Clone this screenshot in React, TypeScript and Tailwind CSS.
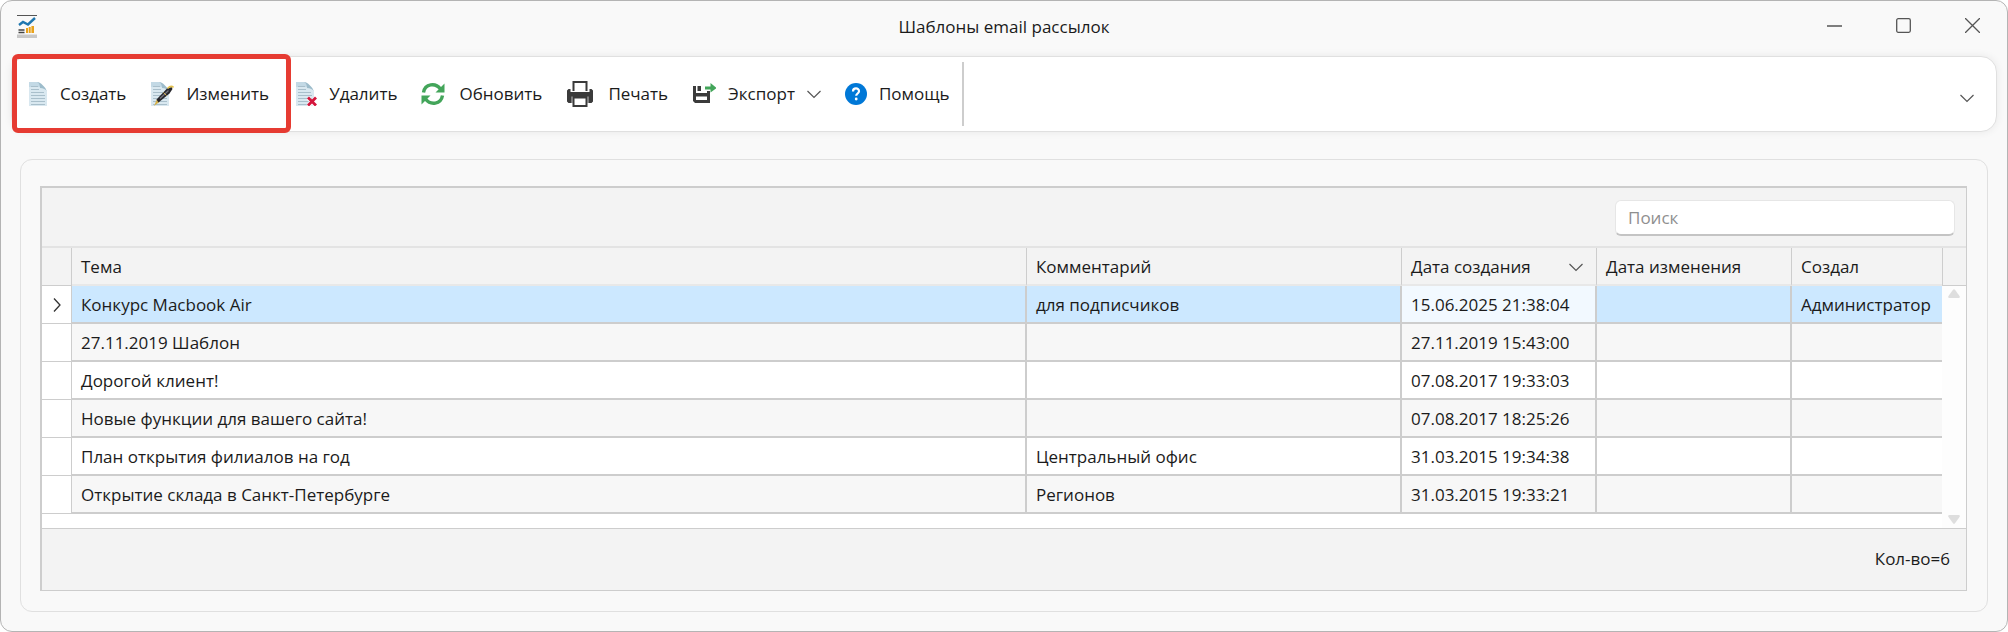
import type { ReactNode } from "react";
import clsx from "clsx";

type Template = {
  subject: string;
  comment: string;
  created: string;
  changed: string;
  author: string;
};

const templates: Template[] = [
  { subject: "Конкурс Macbook Air", comment: "для подписчиков", created: "15.06.2025 21:38:04", changed: "", author: "Администратор" },
  { subject: "27.11.2019 Шаблон", comment: "", created: "27.11.2019 15:43:00", changed: "", author: "" },
  { subject: "Дорогой клиент!", comment: "", created: "07.08.2017 19:33:03", changed: "", author: "" },
  { subject: "Новые функции для вашего сайта!", comment: "", created: "07.08.2017 18:25:26", changed: "", author: "" },
  { subject: "План открытия филиалов на год", comment: "Центральный офис", created: "31.03.2015 19:34:38", changed: "", author: "" },
  { subject: "Открытие склада в Санкт-Петербурге", comment: "Регионов", created: "31.03.2015 19:33:21", changed: "", author: "" },
];

function AppIcon() {
  return (
    <svg width="20" height="24" viewBox="0 0 20 24" fill="none" aria-hidden="true">
      <path d="M0 .5h20" stroke="#555" />
      <path d="M2 10l4-3 5 2.500L18 3" stroke="#1f77b0" strokeWidth="2.400" />
      <path d="M1.500 15h6M1.500 17.500h6" stroke="#444" strokeWidth="1.400" />
      <path d="M9 18v-5h2v5zM11.700 18v-6h2v6zM14.400 18v-7H17v7z" fill="#e9a21b" />
      <path d="M0 19.500h20V23H0z" fill="#c8c8c8" />
    </svg>
  );
}

// Sheet of paper shared by the create, edit and delete icons
function Sheet() {
  return (
    <>
      <path d="M1 0h8c3 .5 3.500 3 4 5 3 .5 5.500 2 6 5v14H1z" fill="#d9e8f0" />
      <path d="M1 0h8c3 .5 3.500 3 4 5H1z" fill="#c3d9e5" />
      <path d="M9 0c3 0 9 5 10 10-1-3-4-4-7-4 0-2-.5-5-3-6z" fill="#9dbccb" />
      <path d="M3 4.500h7M3 7.500h8M3 10.500h13M3 13.500h14M3 16.500h14M3 19.500h14M3 22.500h14" stroke="#a9bfcb" strokeWidth="1.200" />
    </>
  );
}

function CreateIcon() {
  return (
    <svg width="20" height="24" viewBox="0 0 20 24" aria-hidden="true">
      <Sheet />
    </svg>
  );
}

function EditIcon() {
  return (
    <svg width="24" height="24" viewBox="0 0 24 24" aria-hidden="true">
      <Sheet />
      <path d="M4 24l3-7 3 2.500z" fill="#d8b24a" />
      <path d="M6.500 17.500L17 6.500l4.500-1.500 1 2-3 4.500-11 9z" fill="#26262c" />
      <path d="M10 16.500l8.500-8" stroke="#77777f" strokeWidth="1.200" />
      <path d="M17.500 6.500c2-2 4.500-2.500 6-1" stroke="#e2c04c" strokeWidth="1.600" fill="none" />
      <path d="M13.500 10.500l3 3" stroke="#d8b24a" strokeWidth="1" />
    </svg>
  );
}

function DeleteIcon() {
  return (
    <svg width="22" height="24" viewBox="0 0 22 24" aria-hidden="true">
      <Sheet />
      <path d="M13 16l8 8M21 16l-8 8" stroke="#fff" strokeWidth="4" />
      <path d="M13 15.500l8 8M21 15.500l-8 8" stroke="#d4163c" strokeWidth="2.800" />
    </svg>
  );
}

function RefreshIcon() {
  return (
    <svg width="24" height="24" viewBox="0 0 24 24" fill="none" className="mr-0.5" aria-hidden="true">
      <path d="M2.500 10.500C4 1.500 14.500.5 19.500 7" stroke="#43a55a" strokeWidth="3.400" />
      <path d="M23.500 1.500v9h-9z" fill="#43a55a" />
      <path d="M21.500 13.500C20 22.500 9.500 23.500 4.500 17" stroke="#43a55a" strokeWidth="3.400" />
      <path d="M.5 22.500v-9h9z" fill="#43a55a" />
    </svg>
  );
}

function PrintIcon() {
  return (
    <svg width="28" height="28" viewBox="0 0 28 28" className="mr-0.5" aria-hidden="true">
      <path d="M7.500 11V2h13v9" fill="#fff" stroke="#3b3b3b" strokeWidth="2" />
      <path d="M1 10.500L2.500 9h2v3h19V9h2l1.500 1.500v11l-1.500 1.500h-23L1 21.500z" fill="#3b3b3b" />
      <path d="M7.500 17.500h13V26h-13z" fill="#fff" stroke="#3b3b3b" strokeWidth="2" />
      <path d="M6 16.500v6.500M22 16.500v6.500" stroke="#fff" strokeWidth=".7" />
    </svg>
  );
}

function ExportIcon() {
  return (
    <svg width="24" height="22" viewBox="0 0 24 22" aria-hidden="true">
      <path d="M1 3h3v7h11V8h3v12H3l-2-2z" fill="#3b3b3b" />
      <path d="M5.500 3H9v5H5.500z" fill="#3b3b3b" />
      <path d="M4 13.500h11V17H4z" fill="#fff" />
      <path d="M13 3.500h5.500V0l6 5-6 4.500V6.500H13z" fill="#43a55a" />
    </svg>
  );
}

function HelpIcon() {
  return (
    <svg width="22" height="22" viewBox="0 0 22 22" fill="none" aria-hidden="true">
      <circle cx="11" cy="11" r="11" fill="#0078d7" />
      <path d="M8 8.500C8 4.500 14 4.500 14 8.200c0 2.300-2.800 2.300-2.800 4.600" stroke="#fff" strokeWidth="2.200" />
      <circle cx="11.200" cy="16" r="1.400" fill="#fff" />
    </svg>
  );
}

function ChevronDown() {
  return (
    <svg width="14" height="9" viewBox="0 0 14 9" fill="none" stroke="#555" strokeWidth="1.200" aria-hidden="true">
      <path d="M.5 1L7 7.500 13.500 1" />
    </svg>
  );
}

function ToolbarButton({ icon, label, menu }: { icon: ReactNode; label: string; menu?: boolean }) {
  return (
    <button type="button" className="flex h-16 items-center gap-3 px-3 whitespace-nowrap">
      {icon}
      <span>{label}</span>
      {menu && <ChevronDown />}
    </button>
  );
}

function TitleBar() {
  return (
    <header className="grid h-[55px] grid-cols-[1fr_auto_1fr] items-start">
      <div className="pt-3.5 pl-4">
        <AppIcon />
      </div>
      <h1 className="pt-3.5 leading-6">Шаблоны email рассылок</h1>
      <div className="flex h-[49px] justify-end">
        <button type="button" aria-label="Свернуть" className="flex w-[69px] items-center justify-center">
          <svg width="15" height="15" viewBox="0 0 15 15" stroke="#555" strokeWidth="1.500">
            <path d="M0 8h15" />
          </svg>
        </button>
        <button type="button" aria-label="Развернуть" className="flex w-[69px] items-center justify-center">
          <svg width="15" height="15" viewBox="0 0 15 15" fill="none" stroke="#555" strokeWidth="1.300">
            <rect x=".7" y=".7" width="13.600" height="13.600" rx="1.500" />
          </svg>
        </button>
        <button type="button" aria-label="Закрыть" className="flex w-[69px] items-center justify-center">
          <svg width="15" height="15" viewBox="0 0 15 15" stroke="#555" strokeWidth="1.300">
            <path d="M0 0l15 15M15 0L0 15" />
          </svg>
        </button>
      </div>
    </header>
  );
}

function Toolbar() {
  return (
    <div className="mx-2.5 flex items-center rounded-2xl border border-[#e0e0e0] bg-white py-[5px] shadow-[0_0_8px_rgba(0,0,0,0.07)]">
      <div className="relative flex pr-2.5 pl-1">
        <ToolbarButton icon={<CreateIcon />} label="Создать" />
        <ToolbarButton icon={<EditIcon />} label="Изменить" />
        <div className="pointer-events-none absolute -top-2 right-0 -bottom-[7px] left-0 rounded-md border-[5px] border-[#e63b32]" />
      </div>
      <div className="-ml-2 flex">
        <ToolbarButton icon={<DeleteIcon />} label="Удалить" />
        <ToolbarButton icon={<RefreshIcon />} label="Обновить" />
        <ToolbarButton icon={<PrintIcon />} label="Печать" />
        <ToolbarButton icon={<ExportIcon />} label="Экспорт" menu />
        <ToolbarButton icon={<HelpIcon />} label="Помощь" />
      </div>
      <div className="h-16 w-0.5 bg-[#cdcdcd]" />
      <button type="button" aria-label="Дополнительно" className="ml-auto px-[22px] pt-3 pb-1">
        <ChevronDown />
      </button>
    </div>
  );
}

function HeaderCell({ children, last }: { children: ReactNode; last?: boolean }) {
  return (
    <th
      scope="col"
      className={clsx("h-[38px] border-b-2 border-b-[#e8e8e8] px-[9px] pt-0.5 text-left font-normal", !last && "border-r border-r-[#cdcdcd]")}
    >
      {children}
    </th>
  );
}

function TemplateRow({ item, index }: { item: Template; index: number }) {
  const selected = index === 0;
  const cell = "h-[38px] border-b-2 border-[#cdcdcd] px-[9px] pt-0.5";

  return (
    <tr className={selected ? "bg-[#cce8ff]" : index % 2 ? "bg-[#f7f7f7]" : "bg-white"}>
      <td className="h-[38px] border-r border-b border-[#cdcdcd] bg-white">
        {selected && (
          <svg width="8" height="14" viewBox="0 0 8 14" fill="none" stroke="#333" strokeWidth="1.300" className="mx-auto" aria-hidden="true">
            <path d="M1 .5L7 7l-6 6.500" />
          </svg>
        )}
      </td>
      <td className={clsx(cell, "border-r-2")}>{item.subject}</td>
      <td className={clsx(cell, "border-r-2")}>{item.comment}</td>
      <td className={clsx(cell, "border-r-2", selected && "bg-[#f2f9ff]")}>{item.created}</td>
      <td className={clsx(cell, "border-r-2")}>{item.changed}</td>
      <td className={cell}>{item.author}</td>
    </tr>
  );
}

function TemplateTable() {
  return (
    <table className="w-full table-fixed border-separate border-spacing-0 whitespace-nowrap">
      <colgroup>
        <col className="w-[30px]" />
        <col />
        <col className="w-[375px]" />
        <col className="w-[195px]" />
        <col className="w-[195px]" />
        <col className="w-[150px]" />
      </colgroup>
      <thead className="bg-[#f3f3f3]">
        <tr>
          <td className="border-r border-b border-[#cdcdcd]" />
          <HeaderCell>Тема</HeaderCell>
          <HeaderCell>Комментарий</HeaderCell>
          <HeaderCell>
            <div className="flex items-center justify-between pr-1">
              Дата создания
              <ChevronDown />
            </div>
          </HeaderCell>
          <HeaderCell>Дата изменения</HeaderCell>
          <HeaderCell last>Создал</HeaderCell>
        </tr>
      </thead>
      <tbody>
        {templates.map((item, index) => (
          <TemplateRow key={item.created} item={item} index={index} />
        ))}
      </tbody>
    </table>
  );
}

export default function App() {
  return (
    <div className="flex min-h-screen flex-col rounded-xl border border-[#b4b4b4] bg-[#f9f9f9] font-['Open_Sans','Noto_Sans',sans-serif] text-[17px] leading-6 text-[#1b1b1b]">
      <TitleBar />
      <Toolbar />
      <main className="mx-[19px] mt-[27px] mb-[19px] flex flex-1 flex-col rounded-xl border border-[#e0e0e0] pt-[26px] pr-5 pb-5 pl-[19px]">
        <section className="flex flex-1 flex-col border-t-2 border-r border-b border-l-2 border-[#cdcdcd] bg-[#f3f3f3]">
          <div className="flex h-[60px] items-center justify-end border-b-2 border-[#e3e3e3] pt-0.5 pr-[11px]">
            <input
              type="search"
              aria-label="Поиск"
              placeholder="Поиск"
              className="h-9 w-[340px] rounded-md border border-b-2 border-[#e6e6e6] border-b-[#c4c4c4] bg-white px-3 placeholder:text-[#8f8f8f]"
            />
          </div>
          <div className="flex h-[281px] border-b border-[#cdcdcd] bg-white">
            <div className="min-w-0 flex-1">
              <TemplateTable />
            </div>
            <div className="flex w-6 flex-col bg-[#fdfdfd]">
              <div className="h-[38px] border-b border-l border-[#cdcdcd] bg-[#f3f3f3]" />
              <div className="flex flex-1 flex-col items-center justify-between pt-[3px] pb-1">
                <svg width="12" height="9" viewBox="0 0 12 9" fill="#dedede" aria-hidden="true">
                  <path d="M5 .8q1-1 2 0l4.700 6.500q.5 1.700-1 1.700H1.300q-1.500 0-1-1.700z" />
                </svg>
                <svg width="12" height="9" viewBox="0 0 12 9" fill="#dedede" aria-hidden="true">
                  <path d="M5 8.200q1 1 2 0l4.700-6.500Q12.200 0 10.700 0H1.300Q-.2 0 .3 1.700z" />
                </svg>
              </div>
            </div>
          </div>
          <footer className="flex flex-1 items-center justify-end pr-4 pb-0.5">Кол-во=6</footer>
        </section>
      </main>
    </div>
  );
}
